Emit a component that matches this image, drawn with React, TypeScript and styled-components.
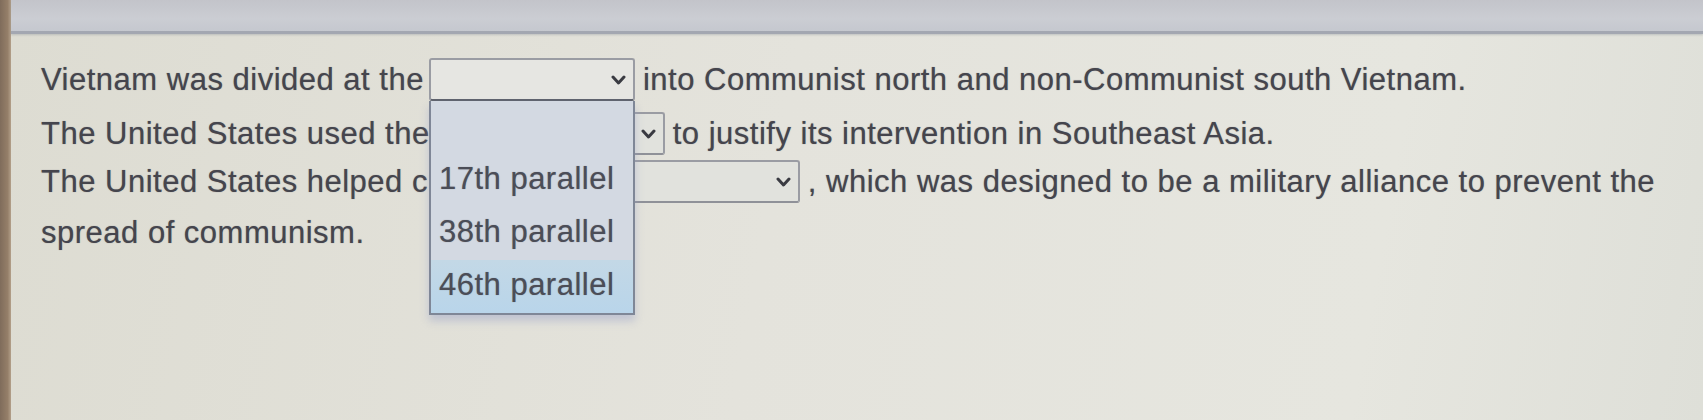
import React from "react";
import styled, { createGlobalStyle } from "styled-components";

const GlobalStyle = createGlobalStyle`
  html, body {
    margin: 0;
    padding: 0;
    height: 420px;
    overflow: hidden;
    background: #e2e1d9;
  }
  #root {
    height: 100%;
  }
`;

const Page = styled.div`
  display: flex;
  height: 420px;
  font-family: "Liberation Sans", Arial, sans-serif;
`;

const Bezel = styled.div`
  width: 11px;
  flex-shrink: 0;
  background: linear-gradient(90deg, #7f6c5b 0%, #957f69 70%, #b3a08a 100%);
`;

const Screen = styled.div`
  flex: 1;
  display: flex;
  flex-direction: column;
  background: linear-gradient(100deg, #dddcd2 0%, #e4e3dc 45%, #e6e6df 80%, #dedfd8 100%);
`;

const TopBar = styled.div`
  height: 31px;
  flex-shrink: 0;
  background: linear-gradient(180deg, #c3c4ca 0%, #cbcdd3 60%, #c5c8cf 100%);
  border-bottom: 3px solid #a3a7b1;
  box-shadow: 0 1px 2px rgba(120, 125, 140, 0.35);
`;

const Content = styled.div`
  padding: 20px 30px 0 30px;
  color: #45454d;
  font-size: 31px;
  letter-spacing: 0.5px;
  line-height: 51px;
  text-shadow: 0 0 1px rgba(70, 70, 80, 0.55);
`;

const Sentence = styled.p<{ $gap?: number }>`
  margin: 0 0 ${(p) => p.$gap ?? 0}px 0;
`;

const SelectWrap = styled.span`
  position: relative;
  top: -2px;
  display: inline-block;
  vertical-align: middle;
  margin: 0 8px 0 5px;
`;

const SelectBox = styled.span<{ $width: number; $open?: boolean }>`
  display: flex;
  align-items: center;
  justify-content: flex-end;
  box-sizing: border-box;
  width: ${(p) => p.$width}px;
  height: 43px;
  padding-right: 7px;
  background: ${(p) => (p.$open ? "#e6e6e2" : "#e1e2dd")};
  border: 2px solid #9a9ca3;
  border-bottom-color: ${(p) => (p.$open ? "#5f636d" : "#8f9198")};
  border-radius: 3px;
`;

const Chevron = () => (
  <svg width="15" height="10" viewBox="0 0 15 10">
    <path d="M2 2 L7.5 8 L13 2" fill="none" stroke="#3a3b42" strokeWidth="3" strokeLinecap="round" strokeLinejoin="round" />
  </svg>
);

const OptionList = styled.ul`
  position: absolute;
  top: 100%;
  left: 0;
  width: 100%;
  box-sizing: border-box;
  margin: 0;
  padding: 0;
  list-style: none;
  background: #d3d9e2;
  border: 2px solid #7f8797;
  border-top: none;
  box-shadow: 0 6px 8px rgba(150, 160, 200, 0.45);
  z-index: 2;
`;

const Option = styled.li<{ $active?: boolean }>`
  height: 53px;
  box-sizing: border-box;
  display: flex;
  align-items: center;
  padding: 0 0 4px 8px;
  color: #4b4d57;
  background: ${(p) => (p.$active ? "linear-gradient(180deg, #c3d8e6, #b9d5ea)" : "transparent")};
`;

const Select: React.FC<{ width: number; open?: boolean; options?: string[]; active?: number }> = ({
  width,
  open,
  options,
  active,
}) => (
  <SelectWrap>
    <SelectBox $width={width} $open={open}>
      <Chevron />
    </SelectBox>
    {open && options && (
      <OptionList>
        {options.map((o, i) => (
          <Option key={i} $active={i === active}>
            {o}
          </Option>
        ))}
      </OptionList>
    )}
  </SelectWrap>
);

const App: React.FC = () => (
  <Page>
    <GlobalStyle />
    <Bezel />
    <Screen>
      <TopBar />
      <Content>
        <Sentence $gap={3}>
          Vietnam was divided at the
          <Select width={206} open options={["", "17th parallel", "38th parallel", "46th parallel"]} active={3} />
          into Communist north and non-Communist south Vietnam.
        </Sentence>
        <Sentence $gap={-3}>
          The United States used the
          <Select width={230} />
          to justify its intervention in Southeast Asia.
        </Sentence>
        <Sentence>
          The United States helped create the
          <Select width={240} />
          , which was designed to be a military alliance to prevent the spread of communism.
        </Sentence>
      </Content>
    </Screen>
  </Page>
);

export default App;
